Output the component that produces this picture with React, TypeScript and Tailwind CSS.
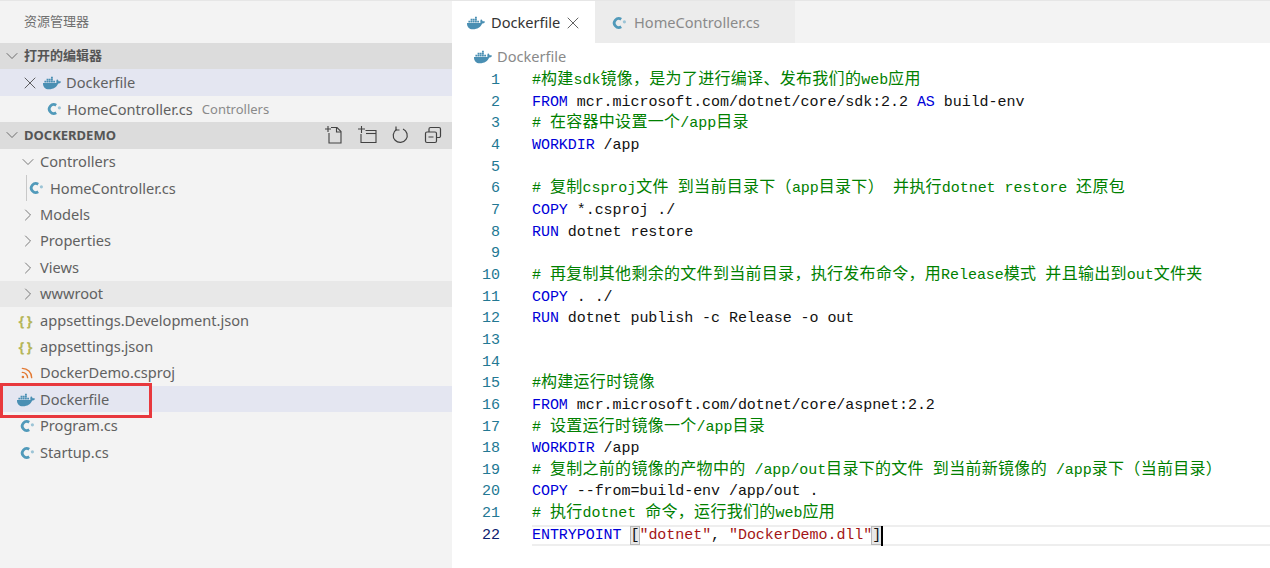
import { FaDocker } from 'react-icons/fa';
import { ChevronDown, ChevronRight, Rss, X } from 'lucide-react';

const cjkStack = '"Noto Sans CJK SC", sans-serif';

function CsIcon({ className = '' }: { className?: string }) {
    return (
        <svg viewBox="0 0 16 16" className={`h-4 w-4 shrink-0 ${className}`} fill="none">
            <path d="M10.200 4.200A4.500 4.500 0 1 0 10.200 11.800" stroke="#519aba" strokeWidth="2.800" />
            <circle cx="13.400" cy="6.800" r="1.600" fill="#9cc4d6" />
        </svg>
    );
}

function Whale({ className = '' }: { className?: string }) {
    return <FaDocker className={`h-[18px] w-[18px] shrink-0 text-[#4a8fb3] ${className}`} />;
}

function Json() {
    return <span className="w-[17px] shrink-0 text-center text-[15px] leading-none font-bold tracking-[2px] text-[#b6b65a]">{'{}'}</span>;
}

function SectionHeader({ label, children }: { label: string; children?: React.ReactNode }) {
    return (
        <div className="flex h-[26.4px] items-center bg-[#dcdcdc] text-[#555]">
            <ChevronDown className="ml-[2px] h-5 w-5 shrink-0" strokeWidth={1} />
            <span className="ml-[2px] text-[13px] font-bold">{label}</span>
            {children}
        </div>
    );
}

function Row({ pad, icon, label, hint, className = '' }: { pad: string; icon: React.ReactNode; label: string; hint?: string; className?: string }) {
    return (
        <div className={`flex h-[26.4px] items-center pt-[1px] ${pad} ${className}`}>
            {icon}
            <span className="ml-[5px] whitespace-nowrap">{label}</span>
            {hint && <span className="ml-[9px] text-[13px] text-[#8a8a8a]">{hint}</span>}
        </div>
    );
}

function Folder({ label, open, className = '' }: { label: string; open?: boolean; className?: string }) {
    const Icon = open ? ChevronDown : ChevronRight;
    return (
        <div className={`flex h-[26.4px] items-center pt-[1px] pl-[18px] ${className}`}>
            <Icon className="h-5 w-5 shrink-0" strokeWidth={1} />
            <span className="ml-[2px]">{label}</span>
        </div>
    );
}

function ToolbarIcons() {
    return (
        <div className="ml-auto mr-[9px] flex items-center gap-[13px]">
            <svg viewBox="0 0 20 20" className="h-5 w-5" fill="none" stroke="#424242" strokeWidth="1.100">
                <path d="M1 4h6M4 1v6M7 2.500h6l4 4V18H5V8" />
                <path d="M12.500 2.500v4.500H17" />
            </svg>
            <svg viewBox="0 0 20 20" className="h-5 w-5" fill="none" stroke="#424242" strokeWidth="1.100">
                <path d="M1 4h7M4.500 1v7M4 9v8.500h15V5.500H8.500" />
                <path d="M9 8.500h10" />
            </svg>
            <svg viewBox="0 0 20 20" className="h-5 w-5" fill="none" stroke="#424242" strokeWidth="1.200">
                <path d="M6.500 4.500A7 7 0 1 0 13 4" />
                <path d="M6 1.500v3.500h3.500" />
            </svg>
            <svg viewBox="0 0 20 20" className="h-5 w-5" fill="none" stroke="#424242" strokeWidth="1.200">
                <rect x="2.500" y="7" width="11" height="10.500" rx="1.500" />
                <path d="M6 7V4a1.500 1.500 0 0 1 1.500-1.500H16A1.500 1.500 0 0 1 17.500 4v7a1.500 1.500 0 0 1-1.500 1.500h-2.500M5.500 12h5" />
            </svg>
        </div>
    );
}

// splits a string so CJK runs get the 16px face and latin runs the mono face
function Code({ text, color }: { text: string; color: string }) {
    const parts = text.split(/([\u3000-\u303f\u4e00-\u9fff\uff00-\uffef]+)/).filter(Boolean);
    return (
        <span className={color}>
            {parts.map((p, i) =>
                /[\u3000-\u303f\u4e00-\u9fff\uff00-\uffef]/.test(p) ? (
                    <span key={i} className="text-[16px] leading-[0] tracking-[0.3px]" style={{ fontFamily: cjkStack }}>{p}</span>
                ) : (
                    <span key={i}>{p}</span>
                ),
            )}
        </span>
    );
}

const KW = 'text-[#0000d8]';
const CM = 'text-[#008000]';
const STR = 'text-[#a31515]';
const TX = 'text-[#111]';

type Seg = [string, string];

const lines: Seg[][] = [
    [['#构建sdk镜像，是为了进行编译、发布我们的web应用', CM]],
    [['FROM', KW], [' mcr.microsoft.com/dotnet/core/sdk:2.2 ', TX], ['AS', KW], [' build-env', TX]],
    [['# 在容器中设置一个/app目录', CM]],
    [['WORKDIR', KW], [' /app', TX]],
    [],
    [['# 复制csproj文件 到当前目录下（app目录下） 并执行dotnet restore 还原包', CM]],
    [['COPY', KW], [' *.csproj ./', TX]],
    [['RUN', KW], [' dotnet restore', TX]],
    [],
    [['# 再复制其他剩余的文件到当前目录，执行发布命令，用Release模式 并且输出到out文件夹', CM]],
    [['COPY', KW], [' . ./', TX]],
    [['RUN', KW], [' dotnet publish -c Release -o out', TX]],
    [],
    [],
    [['#构建运行时镜像', CM]],
    [['FROM', KW], [' mcr.microsoft.com/dotnet/core/aspnet:2.2', TX]],
    [['# 设置运行时镜像一个/app目录', CM]],
    [['WORKDIR', KW], [' /app', TX]],
    [['# 复制之前的镜像的产物中的 /app/out目录下的文件 到当前新镜像的 /app录下（当前目录）', CM]],
    [['COPY', KW], [' --from=build-env /app/out .', TX]],
    [['# 执行dotnet 命令，运行我们的web应用', CM]],
];

function LastLine() {
    return (
        <div className="flex h-[21.67px] leading-[21.67px]">
            <span className="w-[48px] shrink-0 text-right text-[#0b216f]">22</span>
            <div className="ml-[32px] flex h-[21.67px] flex-1 items-center border-y-2 border-[#eeeeee]">
                <span className={KW}>ENTRYPOINT</span>
                <span className={`ml-[9px] flex h-[17px] items-center bg-[#e8e8e8] outline outline-1 outline-[#b9b9b9] ${TX}`}>[</span>
                <span className={STR}>"dotnet"</span>
                <span className={TX}>,&nbsp;</span>
                <span className={STR}>"DockerDemo.dll"</span>
                <span className={`flex h-[17px] items-center bg-[#e8e8e8] outline outline-1 outline-[#b9b9b9] ${TX}`}>]</span>
                <span className="h-[20px] w-[2px] bg-black" />
            </div>
        </div>
    );
}

export default function App() {
    return (
        <div
            className="flex h-[568px] w-[1270px] overflow-hidden border-t border-[#e6e6e6] bg-white text-[14.6px] text-[#616161]"
            style={{ fontFamily: '"Noto Sans", "Noto Sans CJK SC", sans-serif' }}
        >
            <aside className="relative w-[452px] shrink-0 bg-[#f3f3f3]">
                <div className="flex h-[42px] items-center pl-[24px] pb-[1px] text-[13px] text-[#6f6f6f]">资源管理器</div>
                <SectionHeader label="打开的编辑器" />
                <div className="flex h-[26.4px] items-center bg-[#e4e6f1] pl-[20px]">
                    <X className="h-5 w-5 shrink-0 text-[#424242]" strokeWidth={1} />
                    <Whale className="ml-[3px]" />
                    <span className="ml-[5px]">Dockerfile</span>
                </div>
                <Row pad="pl-[46px]" icon={<CsIcon />} label="HomeController.cs" hint="Controllers" />
                <SectionHeader label="DOCKERDEMO"><ToolbarIcons /></SectionHeader>
                <Folder label="Controllers" open />
                <div className="flex h-[26.4px] items-center pl-[26px]">
                    <div className="h-full border-l border-[#c8c8c8]" />
                    <CsIcon className="ml-[1px]" />
                    <span className="ml-[6px] pt-[1px]">HomeController.cs</span>
                </div>
                <Folder label="Models" />
                <Folder label="Properties" />
                <Folder label="Views" />
                <Folder label="wwwroot" className="bg-[#e8e8e8]" />
                <Row pad="pl-[18px]" icon={<Json />} label="appsettings.Development.json" />
                <Row pad="pl-[18px]" icon={<Json />} label="appsettings.json" />
                <Row pad="pl-[19px]" icon={<Rss className="h-[14px] w-[16px] shrink-0 text-[#e37933]" strokeWidth={2.4} />} label="DockerDemo.csproj" />
                <Row pad="pl-[17px]" icon={<Whale />} label="Dockerfile" className="bg-[#e4e6f1]" />
                <Row pad="pl-[19px]" icon={<CsIcon />} label="Program.cs" />
                <Row pad="pl-[19px]" icon={<CsIcon />} label="Startup.cs" />
                <div className="absolute top-[382px] left-0 h-[35px] w-[152px] border-[3px] border-[#e8383d]" />
            </aside>

            <main className="min-w-0 flex-1">
                <div className="flex h-[42px] bg-[#f3f3f3]">
                    <div className="flex w-[143px] items-center bg-white pt-[2px] pl-[15px] text-[#333]">
                        <Whale />
                        <span className="ml-[6px]">Dockerfile</span>
                        <X className="ml-[3px] h-5 w-5 text-[#424242]" strokeWidth={1} />
                    </div>
                    <div className="flex w-[200px] items-center bg-[#ececec] pt-[2px] pl-[16px] text-[#8a8a8a]">
                        <CsIcon />
                        <span className="ml-[7px]">HomeController.cs</span>
                    </div>
                </div>
                <div className="flex h-[26px] items-center pt-[1px] pl-[22px] text-[#8a8a8a]">
                    <Whale />
                    <span className="ml-[5px]">Dockerfile</span>
                </div>
                <div
                    className="pt-[1px] text-[15px] tracking-[-0.05px] whitespace-pre"
                    style={{ fontFamily: '"Liberation Mono", "Noto Sans CJK SC", monospace' }}
                >
                    {lines.map((segs, i) => (
                        <div key={i} className="flex h-[21.67px] leading-[21.67px]">
                            <span className="w-[48px] shrink-0 text-right text-[#237893]">{i + 1}</span>
                            <span className="ml-[32px]">
                                {segs.map(([t, c], j) => <Code key={j} text={t} color={c} />)}
                            </span>
                        </div>
                    ))}
                    <LastLine />
                </div>
            </main>
        </div>
    );
}
